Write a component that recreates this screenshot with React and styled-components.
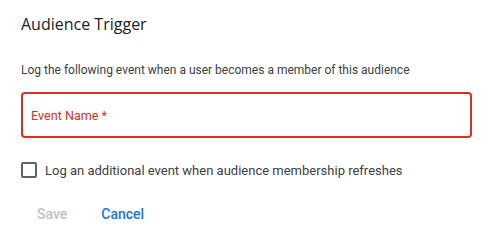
import React, { useState } from "react";
import styled, { createGlobalStyle } from "styled-components";

const GlobalStyle = createGlobalStyle`
  html, body {
    margin: 0;
    padding: 0;
    background: #ffffff;
  }
  body {
    font-family: Roboto, "Liberation Sans", Arial, sans-serif;
  }
`;

const Dialog = styled.div`
  width: 492px;
  height: 248px;
  box-sizing: border-box;
  padding: 14px 20px 0 21px;
  background: #fff;
  display: flex;
  flex-direction: column;
`;

const Title = styled.h2`
  margin: 0;
  font-family: "Open Sans", Roboto, sans-serif;
  font-size: 16px;
  font-weight: 500;
  line-height: 20px;
  color: #202124;
`;

const Description = styled.p`
  margin: 28px 0 0;
  font-size: 12px;
  line-height: 16px;
  color: #3c4043;
`;

const Field = styled.div`
  margin-top: 14px;
  height: 46px;
  box-sizing: border-box;
  border: 2px solid ${(p) => (p.$error ? "#d93025" : "#80868b")};
  border-radius: 4px;
  display: flex;
  align-items: center;
  padding: 0 8px;
`;

const FieldLabel = styled.span`
  font-size: 12.6px;
  color: ${(p) => (p.$error ? "#d93025" : "#5f6368")};
`;

const CheckRow = styled.label`
  margin-top: 24px;
  display: flex;
  align-items: center;
  gap: 8px;
  cursor: pointer;
`;

const Box = styled.span`
  width: 16px;
  height: 16px;
  box-sizing: border-box;
  border: 2px solid #5f6368;
  border-radius: 2px;
  background: ${(p) => (p.$checked ? "#1a73e8" : "transparent")};
  border-color: ${(p) => (p.$checked ? "#1a73e8" : "#5f6368")};
`;

const CheckText = styled.span`
  font-size: 13px;
  color: #3c4043;
`;

const Actions = styled.div`
  margin-top: 27px;
  display: flex;
  gap: 34px;
  padding-left: 16px;
`;

const TextButton = styled.button`
  border: none;
  background: none;
  padding: 0;
  font-family: inherit;
  font-size: 14px;
  font-weight: 500;
  line-height: 18px;
  color: ${(p) => (p.disabled ? "#bdc1c6" : "#1a73e8")};
  cursor: ${(p) => (p.disabled ? "default" : "pointer")};
`;

const App = () => {
  const [checked, setChecked] = useState(false);

  return (
    <>
      <GlobalStyle />
      <Dialog>
        <Title>Audience Trigger</Title>
        <Description>
          Log the following event when a user becomes a member of this audience
        </Description>
        <Field $error>
          <FieldLabel $error>Event Name *</FieldLabel>
        </Field>
        <CheckRow onClick={() => setChecked(!checked)}>
          <Box $checked={checked} />
          <CheckText>Log an additional event when audience membership refreshes</CheckText>
        </CheckRow>
        <Actions>
          <TextButton disabled>Save</TextButton>
          <TextButton>Cancel</TextButton>
        </Actions>
      </Dialog>
    </>
  );
};

export default App;
